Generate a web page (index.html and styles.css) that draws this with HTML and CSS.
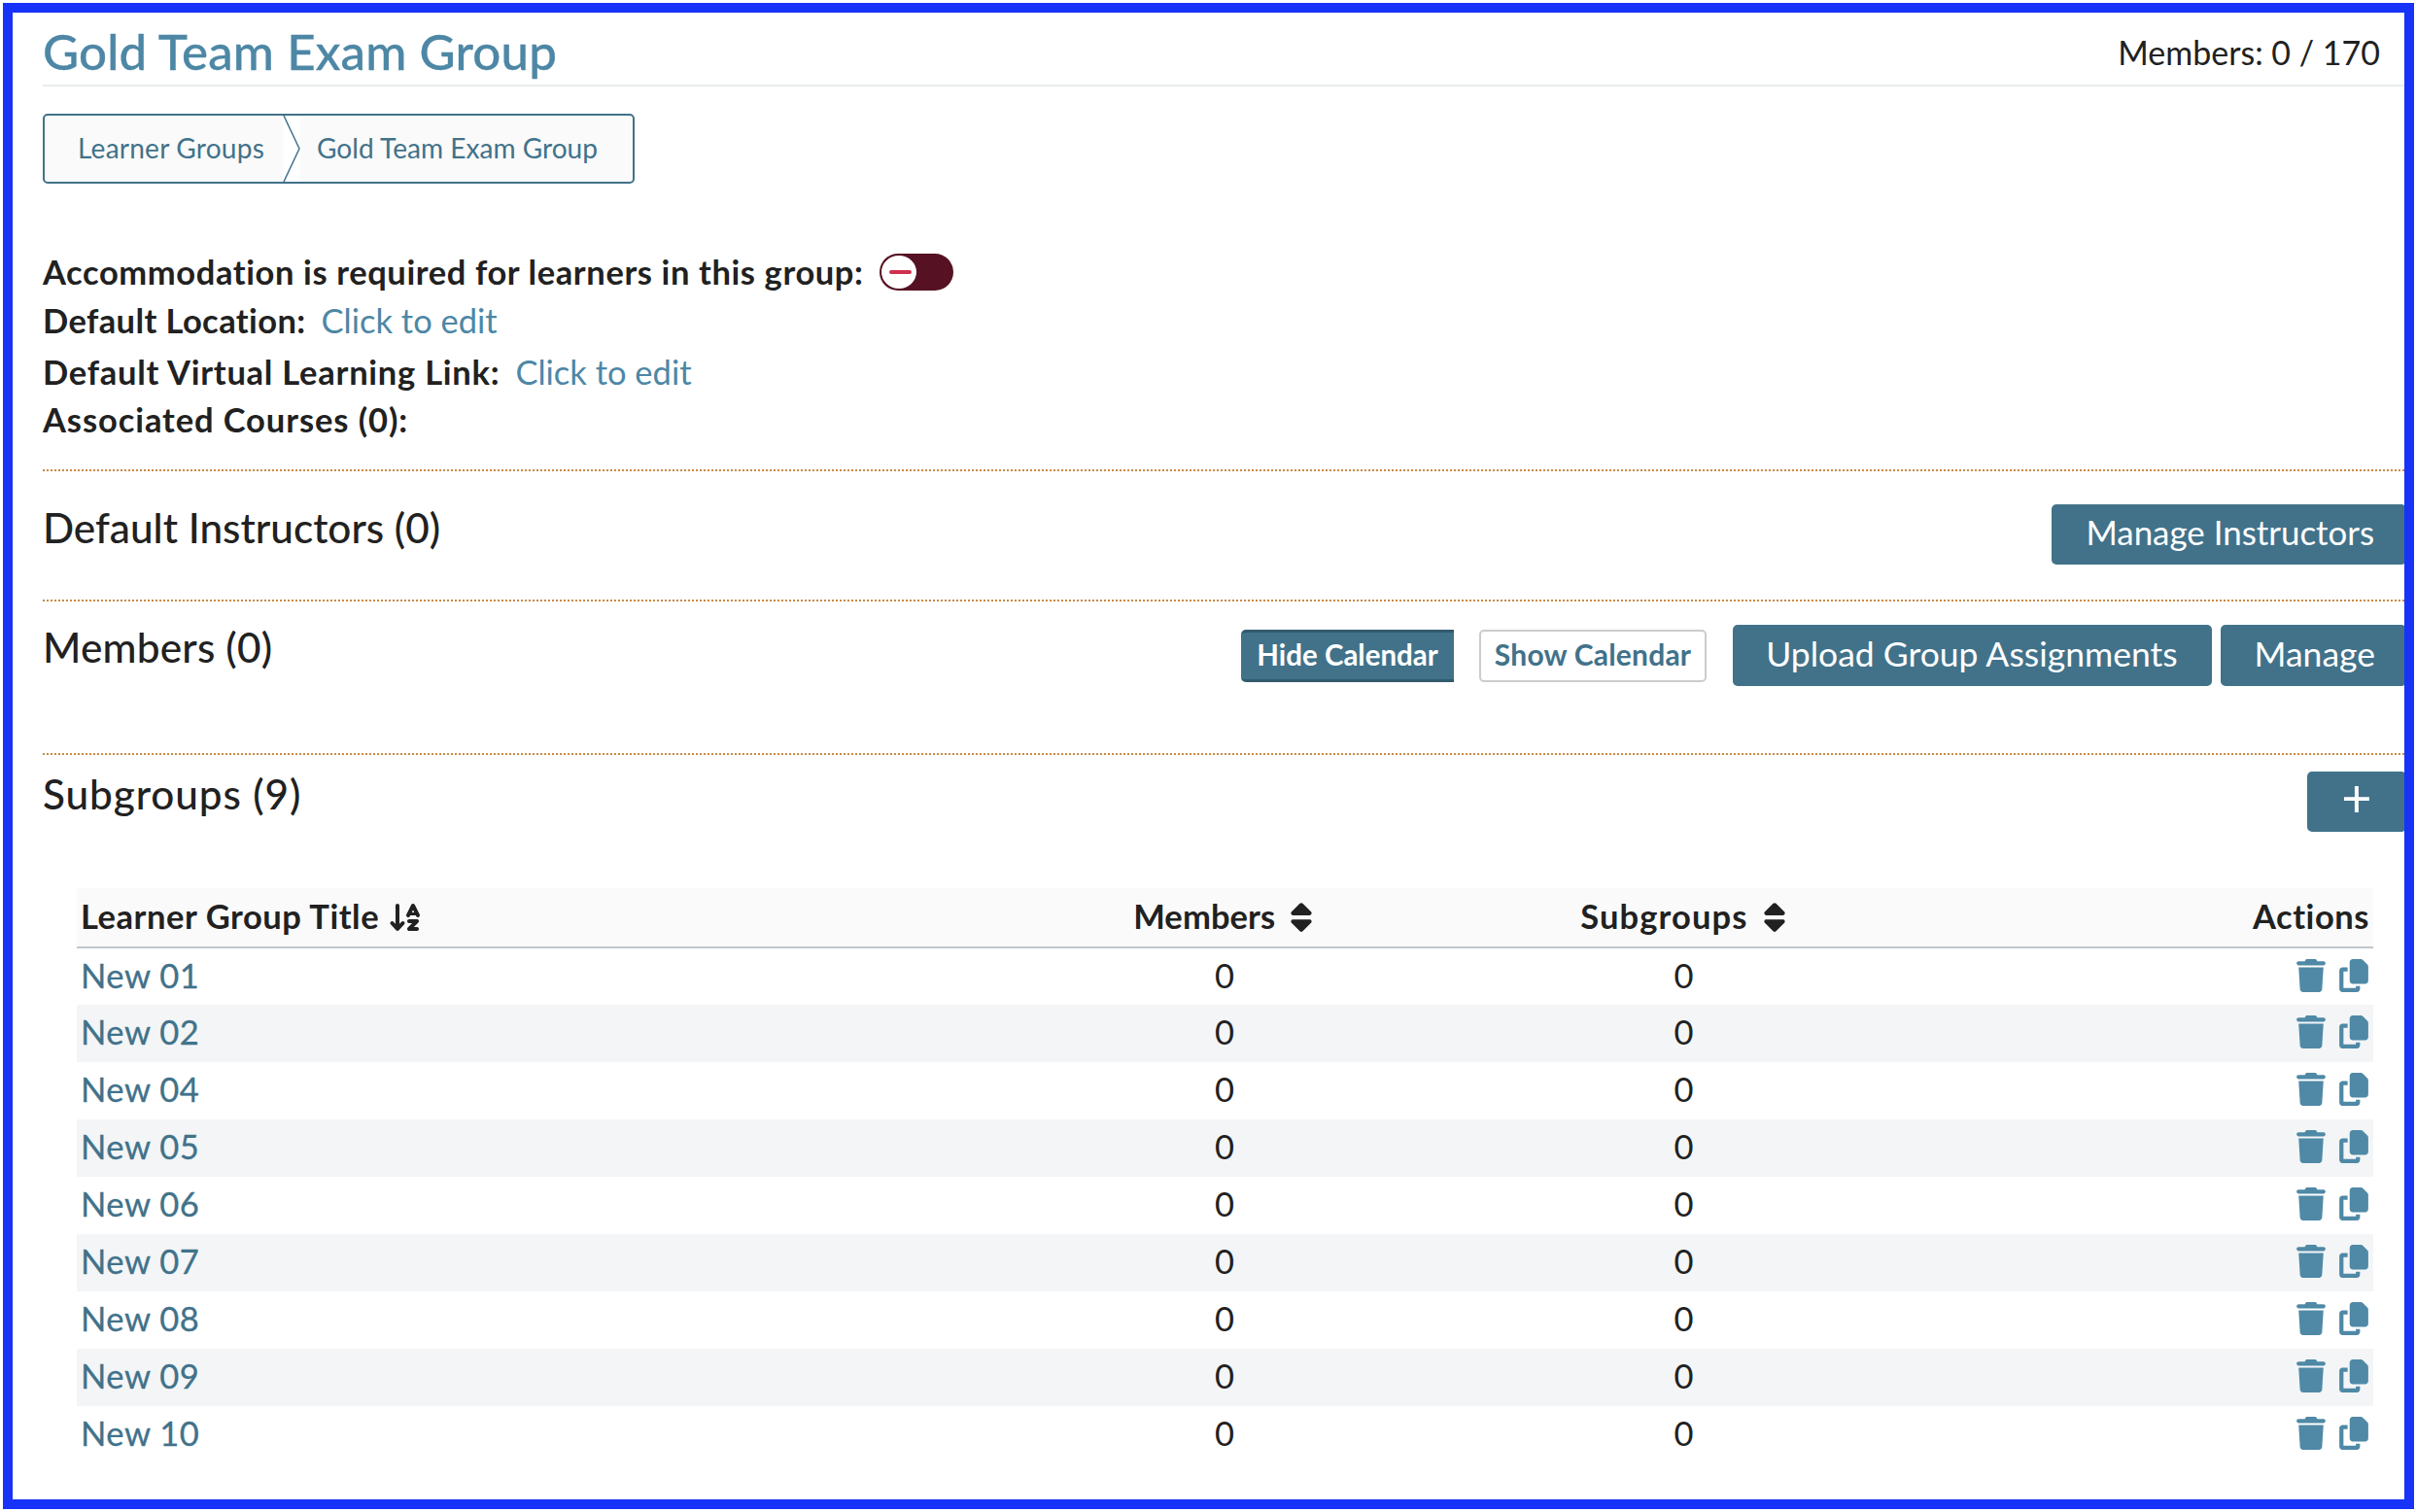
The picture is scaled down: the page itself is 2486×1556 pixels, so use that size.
FILE: index.html
```html
<!DOCTYPE html>
<html lang="en">
<head>
    <meta charset="UTF-8">
    <meta name="viewport" content="width=device-width, initial-scale=1.0">
    <title>Gold Team Exam Group</title>
    <link rel="stylesheet" href="styles.css">
</head>
<body>
    <div class="frame">
        <div class="page">
            <header class="page-header">
                <h1>Gold Team Exam Group</h1>
                <span class="member-count">Members: 0 / 170</span>
            </header>

            <nav class="breadcrumbs">
                <span class="crumb crumb-first">Learner Groups</span>
                <svg class="crumb-sep" viewBox="0 0 18 72" preserveAspectRatio="none"><path d="M1 0 L17 36 L1 72" /></svg>
                <span class="crumb crumb-last">Gold Team Exam Group</span>
            </nav>

            <div class="overview">
                <div class="row row-toggle">
                    <strong>Accommodation is required for learners in this group:</strong>
                    <span class="toggle"><span class="knob"><span class="minus"></span></span></span>
                </div>
                <div class="row row-location"><strong>Default Location:</strong> <a class="edit">Click to edit</a></div>
                <div class="row row-virtual"><strong>Default Virtual Learning Link:</strong> <a class="edit">Click to edit</a></div>
                <div class="row row-courses"><strong>Associated Courses (0):</strong></div>
            </div>

            <section class="section section-instructors">
                <h2>Default Instructors (0)</h2>
                <div class="actions">
                    <button class="btn btn-instructors">Manage Instructors</button>
                </div>
            </section>

            <section class="section section-members">
                <h2>Members (0)</h2>
                <div class="actions">
                    <button class="pill pill-on">Hide Calendar</button>
                    <button class="pill pill-off">Show Calendar</button>
                    <button class="btn btn-upload">Upload Group Assignments</button>
                    <button class="btn btn-manage">Manage</button>
                </div>
            </section>

            <section class="section section-subgroups">
                <h2>Subgroups (9)</h2>
                <div class="actions">
                    <button class="btn btn-plus">+</button>
                </div>
            </section>

            <table class="groups">
                <thead>
                    <tr>
                        <th class="col-title">Learner Group Title
                            <svg class="sort-az" viewBox="0 0 576 512"><path d="M183.6 469.6C177.5 476.2 169 480 160 480s-17.5-3.8-23.6-10.4l-88-96c-11.9-13-11.1-33.3 2-45.2s33.3-11.1 45.2 2L128 365.7V64c0-17.7 14.3-32 32-32s32 14.3 32 32V365.7l32.4-35.4c11.9-13 32.2-13.9 45.2-2s13.9 32.2 2 45.2l-88 96zM320 320c0-17.7 14.3-32 32-32H480c12.9 0 24.6 7.8 29.6 19.8s2.2 25.7-6.9 34.9L429.3 416H480c17.7 0 32 14.3 32 32s-14.3 32-32 32H352c-12.9 0-24.6-7.8-29.6-19.8s-2.2-25.7 6.9-34.9L402.7 352H352c-17.7 0-32-14.3-32-32zM416 32c12.1 0 23.2 6.8 28.6 17.7l64 128 16 32c7.9 15.8 1.5 35-14.3 42.9s-35 1.5-42.9-14.3L460.2 224H371.8l-7.2 14.3c-7.9 15.8-27.1 22.2-42.9 14.3s-22.2-27.1-14.3-42.9l16-32 64-128C393.2 38.8 403.9 32 416 32zM395.8 176h40.4L416 135.6 395.8 176z"/></svg>
                        </th>
                        <th class="col-num col-members">Members
                            <svg class="sort" viewBox="0 0 320 512"><path d="M137.4 41.4c12.5-12.5 32.8-12.5 45.3 0l128 128c9.2 9.2 11.9 22.9 6.9 34.9s-16.6 19.8-29.6 19.8H32c-12.9 0-24.6-7.8-29.6-19.8s-2.2-25.7 6.9-34.9l128-128zm0 429.3l-128-128c-9.2-9.2-11.9-22.9-6.9-34.9s16.6-19.8 29.6-19.8H288c12.9 0 24.6 7.8 29.6 19.8s2.2 25.7-6.9 34.9l-128 128c-12.5 12.5-32.8 12.5-45.3 0z"/></svg>
                        </th>
                        <th class="col-num col-subgroups">Subgroups
                            <svg class="sort" viewBox="0 0 320 512"><path d="M137.4 41.4c12.5-12.5 32.8-12.5 45.3 0l128 128c9.2 9.2 11.9 22.9 6.9 34.9s-16.6 19.8-29.6 19.8H32c-12.9 0-24.6-7.8-29.6-19.8s-2.2-25.7 6.9-34.9l128-128zm0 429.3l-128-128c-9.2-9.2-11.9-22.9-6.9-34.9s16.6-19.8 29.6-19.8H288c12.9 0 24.6 7.8 29.6 19.8s2.2 25.7-6.9 34.9l-128 128c-12.5 12.5-32.8 12.5-45.3 0z"/></svg>
                        </th>
                        <th class="col-actions">Actions</th>
                    </tr>
                </thead>
                <tbody id="rows"></tbody>
            </table>
        </div>
    </div>

    <script>
        var names = ["New 01", "New 02", "New 04", "New 05", "New 06", "New 07", "New 08", "New 09", "New 10"];
        var trash = '<svg class="icon" viewBox="0 0 448 512"><path d="M135.2 17.7L128 32H32C14.3 32 0 46.3 0 64S14.3 96 32 96H416c17.7 0 32-14.3 32-32s-14.3-32-32-32H320l-7.2-14.3C307.4 6.8 296.3 0 284.2 0H163.8c-12.1 0-23.2 6.8-28.6 17.7zM416 128H32L53.2 467c1.6 25.3 22.6 45 47.9 45H346.9c25.3 0 46.3-19.7 47.9-45L416 128z"/></svg>';
        var copy = '<svg class="icon icon-copy" viewBox="0 0 448 512"><path d="M208 0H332.1c12.7 0 24.9 5.1 33.9 14.1l67.9 67.9c9 9 14.1 21.2 14.1 33.9V336c0 26.5-21.5 48-48 48H208c-26.5 0-48-21.5-48-48V48c0-26.5 21.5-48 48-48zM48 128h80v64H64V448H256V416h64v48c0 26.5-21.5 48-48 48H48c-26.5 0-48-21.5-48-48V176c0-26.5 21.5-48 48-48z"/></svg>';
        var html = "";
        for (var i = 0; i < names.length; i++) {
            html += '<tr><td><a class="group-link">' + names[i] + '</a></td><td class="col-num">0</td><td class="col-num">0</td><td class="col-actions">' + trash + copy + '</td></tr>';
        }
        document.getElementById("rows").innerHTML = html;
    </script>
</body>
</html>
```

FILE: styles.css
```css
html, body { margin: 0; background: #fff; }
body { padding: 3px; font-family: Lato, "Noto Sans", sans-serif; font-size: 34.5px; color: #212121; overflow: hidden; }

.frame { width: 2481px; height: 1550px; box-sizing: border-box; border: 10px solid #1733f7; overflow: hidden; background: #fff; }
.page { margin-left: 31px; width: 2432px; }

.page-header { display: flex; justify-content: space-between; height: 58px; padding-top: 16px; border-bottom: 2px solid #e8ecec; }
h1 { margin: 0; font-size: 51px; line-height: 48px; font-weight: 500; color: #4d87a5; letter-spacing: 0.15px; -webkit-text-stroke: 0.3px #4d87a5; }
.member-count { font-size: 34px; line-height: 50px; margin-right: 27px; }

.breadcrumbs { display: inline-flex; align-items: center; height: 72px; box-sizing: border-box; margin-top: 28px; border: 2px solid #41728a; border-radius: 5px; background: #fafafa; color: #41728a; font-size: 28.1px; vertical-align: top; }
.crumb { padding-bottom: 2px; }
.crumb-first { padding-left: 34px; padding-right: 19px; letter-spacing: 0.2px; }
.crumb-sep { width: 18px; height: 68px; background: #fff; }
.crumb-sep path { fill: none; stroke: #41728a; stroke-width: 1.5; }
.crumb-last { padding-left: 17px; padding-right: 36px; }

.overview { margin-top: 66px; }
.row { height: 50px; line-height: 50px; display: flex; align-items: center; gap: 16px; }
.row strong { font-weight: 700; letter-spacing: 0.6px; }
.row-location strong { letter-spacing: 0.4px; }
.row-virtual strong { letter-spacing: 0.75px; }
.row-courses strong { letter-spacing: 0.9px; }
.row-virtual { margin-top: 3px; }
.row-courses { margin-top: -1px; }
.edit { color: #4d87a5; }

.toggle { display: block; width: 76px; height: 38px; border-radius: 19px; background: #561222; position: relative; }
.knob { position: absolute; left: 2px; top: 2px; width: 36px; height: 34px; border-radius: 50%; background: #fff; }
.minus { position: absolute; left: 8px; top: 15px; width: 23px; height: 4px; border-radius: 2px; background: #d0304f; }

/* square 2px dots, a dotted border would come out round */
.section { display: flex; justify-content: space-between; align-items: flex-start; background: repeating-linear-gradient(to right, #c98a45 0 2px, transparent 2px 4px) top left / 100% 2px no-repeat; }
h2 { margin: 0; font-size: 42.3px; line-height: 50px; font-weight: 500; }
.section-members h2 { letter-spacing: 0.2px; }
.section-subgroups h2 { letter-spacing: 0.9px; }
.actions { display: flex; align-items: center; }

.section-instructors { margin-top: 26px; padding-top: 35px; padding-bottom: 36px; }
.section-instructors .actions { margin-top: 1px; }
.section-members { padding-top: 24px; padding-bottom: 69px; }
.section-members .actions { margin-top: 2px; }
.section-subgroups { padding-top: 17px; }
.section-subgroups .actions { margin-top: 2px; }

button { font-family: inherit; cursor: pointer; }
.btn { height: 62px; padding: 0 35px 5px; background: #41728a; color: #fff; border: none; border-radius: 5px; font-size: 35.5px; }
.btn-instructors { font-size: 34.9px; padding-right: 33px; }
.btn-upload { margin-right: 9px; height: 63px; padding-left: 34px; }
.btn-manage { height: 63px; padding-right: 32px; }
.btn-plus { padding: 0 0 8px; width: 102px; font-size: 54px; line-height: 1; }
.pill { height: 54px; padding: 0 16px 3px; font-size: 29.5px; font-weight: 700; border-radius: 5px; }
.pill-on { background: #41728a; color: #fff; border: none; border-top: 3px solid #335a6d; border-bottom: 3px solid #335a6d; border-top-right-radius: 0; border-bottom-right-radius: 0; margin-right: 26px; }
.pill-off { background: #fff; color: #41728a; border: 2px solid #ccc; font-size: 30px; letter-spacing: 0.2px; padding: 0 14px 3px; margin-right: 27px; }

.groups { width: 2363px; margin: 58px 0 0 35px; border-collapse: collapse; table-layout: fixed; }
.groups th { height: 61px; background: #fafafa; border-bottom: 2px solid #bfc6cc; padding: 0 4px 3px; font-weight: 700; font-size: 34.5px; letter-spacing: 0.55px; text-align: left; box-sizing: border-box; }
.groups td { height: 59px; padding: 0 5px 4px 4px; box-sizing: border-box; }
.groups tbody tr:nth-child(even) td { background: #f3f5f7; }
.col-title { width: 40%; }
.groups .col-num { width: 20%; text-align: center; }
.groups .col-actions { width: 20%; text-align: right; }
.groups .col-members { letter-spacing: 0.1px; padding-right: 9px; }
.groups .col-subgroups { letter-spacing: 1.1px; padding-right: 7px; }
.group-link { color: #41728a; letter-spacing: 0.55px; -webkit-text-stroke: 0.3px #41728a; }

.sort-az { height: 32px; width: 36px; fill: #212121; vertical-align: -4px; }
.sort { height: 34px; width: 22px; fill: #212121; vertical-align: -5px; margin-left: 7px; }
.icon { height: 34px; width: 30px; fill: #4f89a6; vertical-align: -4px; }
.icon-copy { margin-left: 14px; }
```
